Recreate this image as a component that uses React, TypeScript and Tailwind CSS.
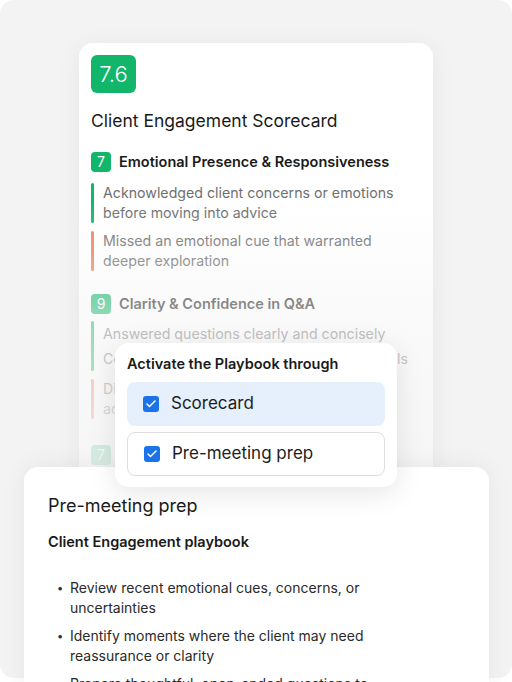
import { Check } from 'lucide-react';

const font = { fontFamily: 'Inter, "Noto Sans", sans-serif' };

function ScoreBadge({ value }: { value: string }) {
  return (
    <div className="w-5 h-5 rounded-[4px] bg-[#12b66a] text-white text-[14px] leading-5 flex items-center justify-center shrink-0">
      {value}
    </div>
  );
}

function Note({ color, lines, lh = 'leading-5' }: { color: string; lines: string[]; lh?: string }) {
  return (
    <div className="flex gap-[9px]">
      <div className={`w-[3px] rounded-full shrink-0 ${color}`} />
      <p className={`text-[14.2px] ${lh} text-[#6f6f6f] whitespace-nowrap`}>
        {lines.map((l, i) => (
          <span key={i} className="block">{l}</span>
        ))}
      </p>
    </div>
  );
}

function Option({ label, active }: { label: string; active?: boolean }) {
  return (
    <div
      className={`h-11 rounded-lg flex items-center gap-3 px-4 ${
        active ? 'bg-[#e6effc]' : 'bg-white border border-[#dedede]'
      }`}
    >
      <div className="w-4 h-4 rounded-[3px] bg-[#1a73e8] flex items-center justify-center">
        <Check size={12} strokeWidth={3} className="text-white" />
      </div>
      <span className="text-[17px] text-[#1d1d1d]">{label}</span>
    </div>
  );
}

const bullets = [
  ['Review recent emotional cues, concerns, or', 'uncertainties'],
  ['Identify moments where the client may need', 'reassurance or clarity'],
  ['Prepare thoughtful, open-ended questions to', 'explore their priorities'],
];

export default function App() {
  return (
    <div className="relative w-[512px] h-[682px] bg-white overflow-hidden" style={font}>
      <div className="relative h-[678px] rounded-[14px] bg-[#f3f3f3] pt-[43px]">
        {/* Scorecard */}
        <div className="relative ml-[79px] w-[354px] h-[440px] rounded-[14px] bg-white shadow-[0_4px_24px_rgba(0,0,0,0.06)] overflow-hidden px-3 pt-3">
          <div className="w-[45px] h-[38px] rounded-md bg-[#12b66a] text-white text-[22px] font-light flex items-center justify-center">
            7.6
          </div>
          <h2 className="mt-4 text-[17.5px] leading-6 text-[#1a1a1a]">Client Engagement Scorecard</h2>

          <div className="mt-[18px] flex items-center gap-2">
            <ScoreBadge value="7" />
            <span className="text-[14.5px] font-semibold text-[#1a1a1a]">Emotional Presence &amp; Responsiveness</span>
          </div>
          <div className="mt-[10px] flex flex-col gap-2">
            <Note color="bg-[#12b66a]" lines={['Acknowledged client concerns or emotions', 'before moving into advice']} />
            <Note color="bg-[#f27c5a]" lines={['Missed an emotional cue that warranted', 'deeper exploration']} />
          </div>

          <div className="mt-[22px] flex items-center gap-2">
            <ScoreBadge value="9" />
            <span className="text-[14.5px] font-semibold text-[#1a1a1a]">Clarity &amp; Confidence in Q&amp;A</span>
          </div>
          <div className="mt-[6px] flex flex-col gap-2">
            <Note color="bg-[#12b66a]" lh="leading-[25px]" lines={['Answered questions clearly and concisely', "Connected answers back to the client's goals"]} />
            <Note color="bg-[#f27c5a]" lines={["Didn't check for understanding before", 'advancing to the next topic']} />
          </div>

          <div className="mt-[26px] flex items-center gap-2">
            <ScoreBadge value="7" />
            <span className="text-[14.5px] font-semibold text-[#1a1a1a]">Active Listening</span>
          </div>

          <div className="absolute inset-0 pointer-events-none bg-[linear-gradient(to_bottom,rgba(245,245,245,0)_36%,rgba(245,245,245,0.55)_62%,rgba(245,245,245,0.93)_100%)]" />
        </div>

        {/* Bottom card */}
        <div className="relative z-10 -mt-[16px] ml-6 w-[465px] h-[240px] rounded-[14px] bg-white shadow-[0_-2px_24px_rgba(0,0,0,0.06)] pl-6 pt-[27px]">
          <h3 className="text-[18px] leading-6 text-[#1a1a1a]">Pre-meeting prep</h3>
          <p className="mt-[14px] text-[14.5px] leading-5 font-semibold text-[#1a1a1a]">Client Engagement playbook</p>
          <ul className="mt-[26px] flex flex-col gap-2 pl-[9px]">
            {bullets.map((b, i) => (
              <li key={i} className="flex text-[14px] leading-5 text-[#2a2a2a]">
                <span className="w-[13px] shrink-0 text-[11px]">•</span>
                <span className="whitespace-nowrap">
                  {b.map((l, j) => (
                    <span key={j} className="block">{l}</span>
                  ))}
                </span>
              </li>
            ))}
          </ul>
        </div>

        {/* Popup */}
        <div className="absolute z-20 left-[115px] top-[343px] w-[282px] h-[144px] rounded-[14px] bg-white shadow-[0_6px_28px_rgba(0,0,0,0.10)] px-3 pt-[11px]">
          <p className="text-[14.5px] leading-5 font-semibold text-[#1a1a1a]">Activate the Playbook through</p>
          <div className="mt-[8px] flex flex-col gap-[6px]">
            <Option label="Scorecard" active />
            <Option label="Pre-meeting prep" />
          </div>
        </div>
      </div>
    </div>
  );
}
